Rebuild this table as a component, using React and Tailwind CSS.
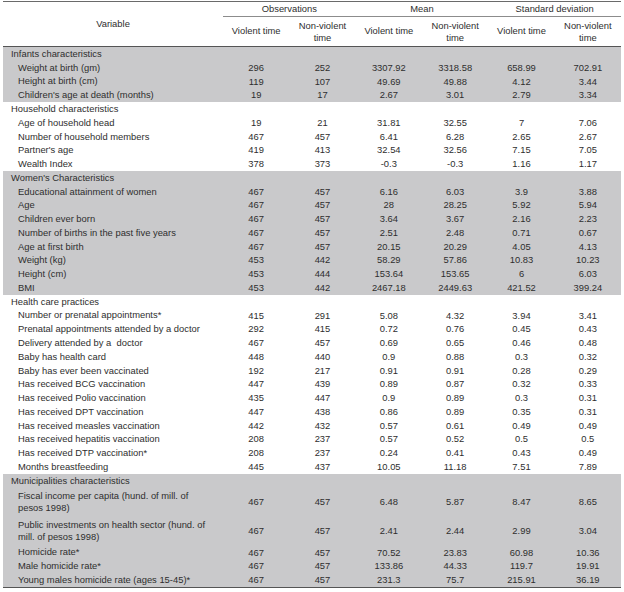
import React from 'react';

const sections = [
    {
        title: 'Infants characteristics',
        gray: true,
        rows: [
            ['Weight at birth (gm)', '296', '252', '3307.92', '3318.58', '658.99', '702.91'],
            ['Height at birth (cm)', '119', '107', '49.69', '49.88', '4.12', '3.44'],
            ["Children's age at death (months)", '19', '17', '2.67', '3.01', '2.79', '3.34'],
        ],
    },
    {
        title: 'Household characteristics',
        gray: false,
        rows: [
            ['Age of household head', '19', '21', '31.81', '32.55', '7', '7.06'],
            ['Number of household members', '467', '457', '6.41', '6.28', '2.65', '2.67'],
            ["Partner's age", '419', '413', '32.54', '32.56', '7.15', '7.05'],
            ['Wealth Index', '378', '373', '-0.3', '-0.3', '1.16', '1.17'],
        ],
    },
    {
        title: "Women's Characteristics",
        gray: true,
        rows: [
            ['Educational attainment of women', '467', '457', '6.16', '6.03', '3.9', '3.88'],
            ['Age', '467', '457', '28', '28.25', '5.92', '5.94'],
            ['Children ever born', '467', '457', '3.64', '3.67', '2.16', '2.23'],
            ['Number of births in the past five years', '467', '457', '2.51', '2.48', '0.71', '0.67'],
            ['Age at first birth', '467', '457', '20.15', '20.29', '4.05', '4.13'],
            ['Weight (kg)', '453', '442', '58.29', '57.86', '10.83', '10.23'],
            ['Height (cm)', '453', '444', '153.64', '153.65', '6', '6.03'],
            ['BMI', '453', '442', '2467.18', '2449.63', '421.52', '399.24'],
        ],
    },
    {
        title: 'Health care practices',
        gray: false,
        rows: [
            ['Number or prenatal appointments*', '415', '291', '5.08', '4.32', '3.94', '3.41'],
            ['Prenatal appointments attended by a doctor', '292', '415', '0.72', '0.76', '0.45', '0.43'],
            ['Delivery attended by a\u00a0 doctor', '467', '457', '0.69', '0.65', '0.46', '0.48'],
            ['Baby has health card', '448', '440', '0.9', '0.88', '0.3', '0.32'],
            ['Baby has ever been vaccinated', '192', '217', '0.91', '0.91', '0.28', '0.29'],
            ['Has received BCG vaccination', '447', '439', '0.89', '0.87', '0.32', '0.33'],
            ['Has received Polio vaccination', '435', '447', '0.9', '0.89', '0.3', '0.31'],
            ['Has received DPT vaccination', '447', '438', '0.86', '0.89', '0.35', '0.31'],
            ['Has received measles vaccination', '442', '432', '0.57', '0.61', '0.49', '0.49'],
            ['Has received hepatitis vaccination', '208', '237', '0.57', '0.52', '0.5', '0.5'],
            ['Has received DTP vaccination*', '208', '237', '0.24', '0.41', '0.43', '0.49'],
            ['Months breastfeeding', '445', '437', '10.05', '11.18', '7.51', '7.89'],
        ],
    },
    {
        title: 'Municipalities characteristics',
        gray: true,
        rows: [
            ['Fiscal income per capita (hund. of mill. of pesos 1998)', '467', '457', '6.48', '5.87', '8.47', '8.65'],
            ['Public investments on health sector (hund. of mill. of pesos 1998)', '467', '457', '2.41', '2.44', '2.99', '3.04'],
            ['Homicide rate*', '467', '457', '70.52', '23.83', '60.98', '10.36'],
            ['Male homicide rate*', '467', '457', '133.86', '44.33', '119.7', '19.91'],
            ['Young males homicide rate (ages 15-45)*', '467', '457', '231.3', '75.7', '215.91', '36.19'],
        ],
    },
];

const cols = 'grid grid-cols-[220px_repeat(6,1fr)]';

const DataRow = ({ row }) => {
    const [label, ...values] = row;
    // the two long municipality labels wrap onto a second line
    const tall = label.length > 45;
    return (
        <div className={`${cols} ${tall ? 'h-[29px]' : 'h-[13.78px]'}`}>
            <div className="flex items-center pl-[15px] pr-[12px] leading-[12.3px]">{label}</div>
            {values.map((v, i) => (
                <div key={i} className="flex items-center justify-center">{v}</div>
            ))}
        </div>
    );
};

export default function App() {
    return (
        <div className="w-[624px] h-[592px] bg-white pt-[1px] text-[#2e2e2e] text-[9.4px] font-['Liberation_Sans',Arial,sans-serif]">
            <div className="ml-[3px] w-[618px] border-t border-[#6a6a6a]">
                {/* header */}
                <div className={`${cols} border-b border-[#555]`}>
                    <div className="row-span-2 flex items-center justify-center pt-[1px]">Variable</div>
                    <div className="col-span-2 h-[15px] flex items-center justify-center border-b border-[#8c8c8c]">Observations</div>
                    <div className="col-span-2 h-[15px] flex items-center justify-center border-b border-[#8c8c8c]">Mean</div>
                    <div className="col-span-2 h-[15px] flex items-center justify-center border-b border-[#8c8c8c]">Standard deviation</div>
                    {[0, 1, 2].map((g) => (
                        <React.Fragment key={g}>
                            <div className="h-[29px] flex items-center justify-center">Violent time</div>
                            <div className="h-[29px] flex items-center justify-center text-center leading-[11.5px]">Non-violent<br />time</div>
                        </React.Fragment>
                    ))}
                </div>

                {/* body */}
                {sections.map((s) => (
                    <div key={s.title} className={s.gray ? 'bg-[#c9c9cb]' : 'bg-white'}>
                        <div className="h-[13.78px] flex items-center pl-[8px]">{s.title}</div>
                        {s.rows.map((r) => (
                            <DataRow key={r[0]} row={r} />
                        ))}
                    </div>
                ))}
                <div className="border-t border-[#555]" />
            </div>
        </div>
    );
}
